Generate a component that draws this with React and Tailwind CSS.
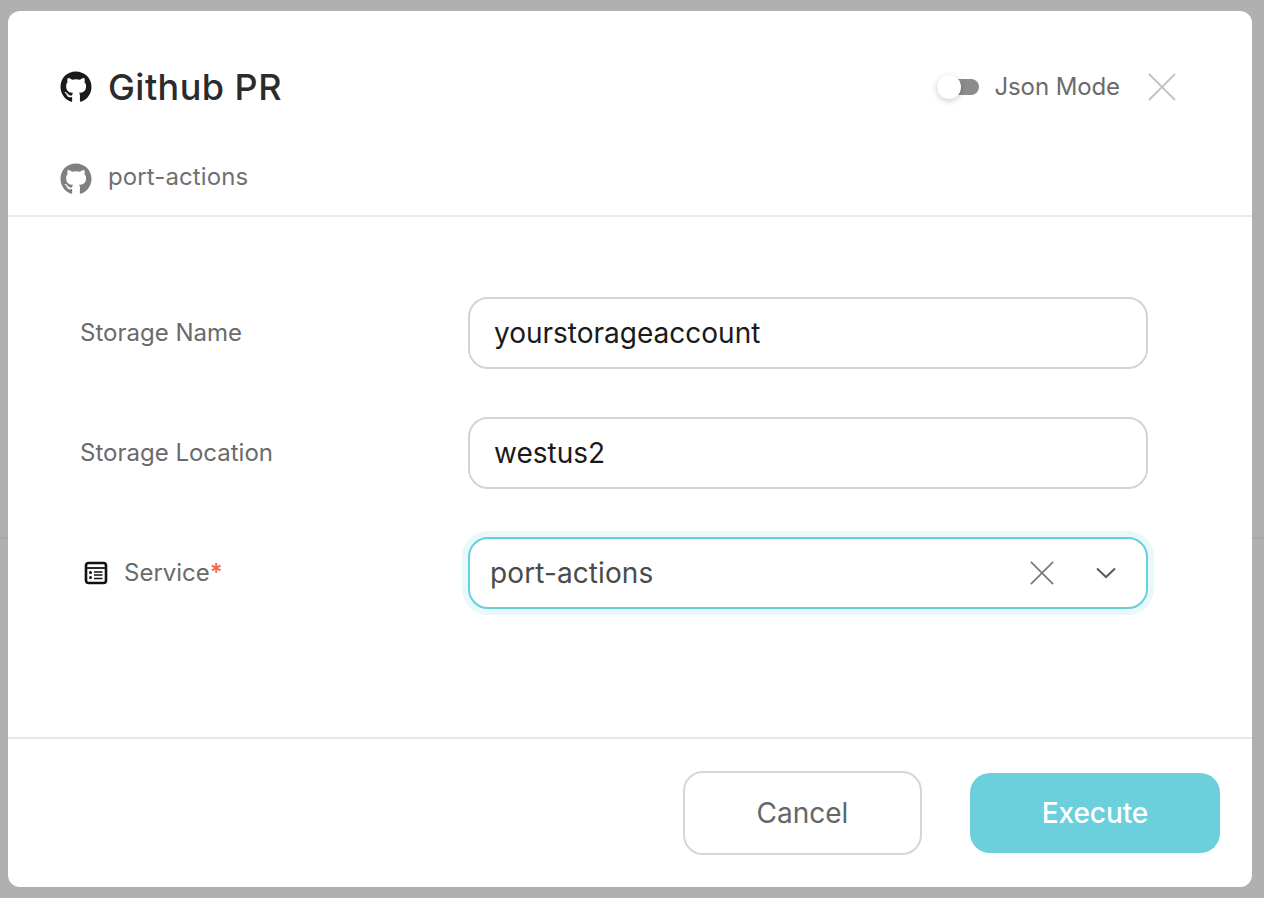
import React from 'react';
import { FaGithub } from 'react-icons/fa';

const FormRow = ({ label, value }) => (
    <div className="flex items-center">
        <label className="w-[388px] text-[24px] leading-[30px] text-[#6b6b6b]">{label}</label>
        <div className="w-[680px] h-[72px] flex items-center pl-[24px] bg-white border-2 border-[#d4d4d4] rounded-[20px] text-[28px] text-[#1a1a1a]">
            {value}
        </div>
    </div>
);

const CrossIcon = ({ className }) => (
    <svg viewBox="0 0 28 28" className={className} fill="none" stroke="currentColor" strokeWidth="2">
        <path d="M1 1 L27 27 M27 1 L1 27" />
    </svg>
);

const ListIcon = () => (
    <svg viewBox="0 0 24 24" className="w-[24px] h-[24px] text-[#111111]" fill="none" stroke="currentColor">
        <rect x="2" y="2" width="20" height="20" rx="2.5" strokeWidth="2.6" />
        <path d="M3 7 H21" strokeWidth="1.8" />
        <path d="M10 11 H18.5 M10 14 H18.5 M10 17.5 H18.5" strokeWidth="1.7" />
        <circle cx="6.5" cy="11.5" r="1.5" fill="currentColor" stroke="none" />
        <circle cx="6.5" cy="16.5" r="1.5" fill="currentColor" stroke="none" />
    </svg>
);

const App = () => {
    return (
        <div className="relative w-[1264px] h-[898px] bg-[#b0b0b0] pt-[11px] pl-[8px] overflow-hidden font-['Inter',sans-serif]">
            {/* line of the page under the overlay */}
            <div className="absolute left-0 right-0 top-[537px] h-[2px] bg-[#a8a8a8]" />

            <div className="relative w-[1244px] h-[876px] bg-white rounded-[12px] flex flex-col overflow-hidden">
                {/* Header */}
                <div className="h-[206px] shrink-0 border-b-2 border-[#e8e8ee] pl-[52px] pr-[76px] pt-[60px]">
                    <div className="flex items-center justify-between h-[32px]">
                        <div className="flex items-center gap-[16px]">
                            <FaGithub className="w-[32px] h-[32px] text-[#1a1a1a]" />
                            <h1 className="text-[36px] leading-[40px] font-[550] tracking-[0.45px] text-[#2b2b2b]">Github PR</h1>
                        </div>
                        <div className="flex items-center">
                            <div className="relative w-[42px] h-[16px] bg-[#8c8c8c] rounded-full">
                                <div className="absolute left-0 top-[-4px] w-[24px] h-[24px] bg-white rounded-full shadow-[0_2px_6px_rgba(0,0,0,0.2)]" />
                            </div>
                            <span className="ml-[15px] text-[24px] leading-[30px] tracking-[-0.1px] text-[#6b6b6b]">Json Mode</span>
                            <CrossIcon className="ml-[28px] w-[28px] h-[28px] text-[#c4c4c4]" />
                        </div>
                    </div>
                    <div className="flex items-start gap-[16px] mt-[60px]">
                        <FaGithub className="w-[32px] h-[32px] text-[#808080]" />
                        <span className="text-[24px] leading-[28px] tracking-[0.1px] text-[#707070]">port-actions</span>
                    </div>
                </div>

                {/* Form */}
                <div className="flex-1 pl-[72px] pt-[80px] flex flex-col gap-[48px] border-b-2 border-[#e8e8e8]">
                    <FormRow label="Storage Name" value="yourstorageaccount" />
                    <FormRow label="Storage Location" value="westus2" />
                    <div className="flex items-center">
                        <div className="w-[388px] flex items-center">
                            <span className="ml-[4px]"><ListIcon /></span>
                            <label className="ml-[16px] text-[24px] leading-[30px] text-[#6b6b6b]">
                                Service<span className="font-semibold text-[#f26b4a]">*</span>
                            </label>
                        </div>
                        <div className="w-[680px] h-[72px] flex items-center pl-[20px] bg-white border-2 border-[#68cfdc] rounded-[20px] shadow-[0_0_0_6px_#e9f8fa] text-[28px] text-[#4a4a4a]">
                            <span className="flex-1 tracking-[0.1px]">port-actions</span>
                            <CrossIcon className="w-[24px] h-[24px] text-[#7a7a7a]" />
                            <svg viewBox="0 0 20 12" className="ml-[42px] mr-[30px] w-[20px] h-[12px] text-[#5a5a5a]" fill="none" stroke="currentColor" strokeWidth="2">
                                <path d="M1 1.5 L10 10 L19 1.5" />
                            </svg>
                        </div>
                    </div>
                </div>

                {/* Footer */}
                <div className="h-[148px] shrink-0 flex items-start justify-end pr-[32px] pt-[32px] gap-[48px]">
                    <button className="w-[239px] h-[84px] bg-white border-2 border-[#d6d6d6] rounded-[20px] text-[28px] text-[#666666]">Cancel</button>
                    <button className="mt-[2px] w-[250px] h-[80px] bg-[#6bcfdc] rounded-[20px] text-[28px] font-medium tracking-[-0.1px] text-white">Execute</button>
                </div>
            </div>
        </div>
    );
};

export default App;
